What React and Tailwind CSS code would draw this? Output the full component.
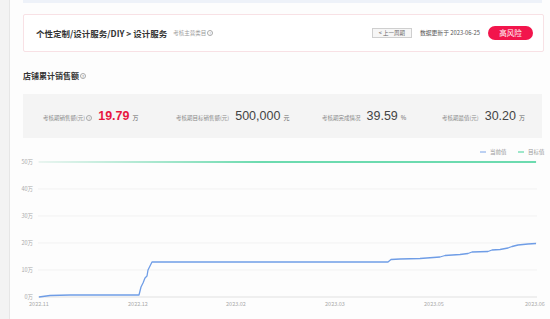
import React from "react";

const font = { fontFamily: '"Noto Sans CJK SC", "Noto Sans", sans-serif' };

const blue = [
  [39, 297], [50, 295.5], [70, 295], [139, 295], [141, 287], [143, 283], [145, 278],
  [147, 276], [148, 270], [152, 262], [388, 262], [391, 259.5], [400, 259], [420, 258.5],
  [440, 257], [445, 255.5], [460, 254.5], [468, 253.5], [472, 252], [488, 251.5],
  [492, 250], [500, 249.5], [508, 248], [512, 246.5], [518, 245], [528, 244], [536, 243.5],
];

function Info() {
  return (
    <span className="inline-grid place-items-center w-[6px] h-[6px] rounded-full border-[0.5px] border-[#aaa] text-[4px] leading-none text-[#aaa] ml-[1px]">
      ?
    </span>
  );
}

function Stat({ label, value, unit, red, info, w }) {
  return (
    <div className={`flex items-baseline ${w}`}>
      <span className="text-[5.5px] text-[#888] mr-[6px] flex items-center">
        {label}
        {info && <Info />}
      </span>
      <span
        className={`text-[12.5px] leading-none ${red ? "text-[#e8173f] font-bold" : "text-[#444]"}`}
        style={{ fontFamily: '"Liberation Sans", sans-serif' }}
      >
        {value}
      </span>
      <span className="text-[6px] text-[#666] ml-[3px]">{unit}</span>
    </div>
  );
}

function Chart() {
  const ys = [
    ["50万", 162], ["40万", 189], ["30万", 216], ["20万", 243], ["10万", 270], ["0万", 297],
  ];
  const xs = [
    ["2022.11", 39], ["2022.12", 138], ["2023.02", 236], ["2023.03", 335], ["2023.05", 434], ["2023.06", 535],
  ];
  return (
    <svg width="520" height="181" viewBox="23 138 520 181" className="block overflow-visible">
      <defs>
        <linearGradient id="g" x1="39" x2="260" y1="0" y2="0" gradientUnits="userSpaceOnUse">
          <stop offset="0" stopColor="#3ed197" stopOpacity="0.1" />
          <stop offset="1" stopColor="#3ed197" stopOpacity="1" />
        </linearGradient>
      </defs>
      <line x1="480" x2="486" y1="152" y2="152" stroke="#7aa3e8" strokeWidth="1" />
      <text x="490" y="154" fontSize="5.5" fill="#999">当前值</text>
      <line x1="518" x2="524" y1="152" y2="152" stroke="#3ed197" strokeWidth="1" />
      <text x="528" y="154" fontSize="5.5" fill="#999">目标值</text>
      {ys.map(([t, y]) => (
        <g key={t}>
          <line x1="38" x2="537" y1={y} y2={y} stroke={y === 297 ? "#d4d4d4" : "#ececec"} strokeWidth="0.7" />
          <text x="33" y={y + 2} fontSize="5.5" fill="#aaa" textAnchor="end">{t}</text>
        </g>
      ))}
      {xs.map(([t, x]) => (
        <text key={t} x={x} y={305.5} fontSize="5.5" fill="#aaa" textAnchor="middle">{t}</text>
      ))}
      <line x1="39" x2="536" y1="162" y2="162" stroke="url(#g)" strokeWidth="1.4" />
      <polyline
        points={blue.map((p) => p.join(",")).join(" ")}
        fill="none"
        stroke="#6f9de6"
        strokeWidth="1.3"
        strokeLinejoin="round"
      />
    </svg>
  );
}

export default function App() {
  return (
    <div className="w-[550px] h-[319px] flex bg-[#fdfdfd] overflow-hidden" style={font}>
      <div className="w-[10px] h-full bg-[#f3f3f3] border-r border-[#e6e6e6]" />
      <div className="flex-1 pl-[13px] pr-[6px]">
        <div className="h-[3px] mr-[2px] bg-[#eef2f9]" />

        <div className="mt-[11px] h-[38px] border border-[#f8e1e5] rounded-[2px] bg-white flex items-center pl-[12px] pr-[10px]">
          <span className="text-[8.5px] font-bold text-[#333]">个性定制/设计服务/DIY &gt; 设计服务</span>
          <span className="text-[5.5px] text-[#999] ml-[6px] flex items-center">
            考核主营类目
            <Info />
          </span>
          <div className="ml-auto flex items-center">
            <span className="h-[10px] px-[6px] border border-[#cfcfcf] bg-[#f6f6f6] text-[5.5px] text-[#666] flex items-center">
              &lt; 上一周期
            </span>
            <span className="ml-[8px] text-[5.8px] text-[#555]">数据更新于 2023-06-25</span>
            <span className="ml-[8px] w-[45px] h-[14px] rounded-full bg-[#f2154c] text-white text-[7.5px] flex items-center justify-center">
              高风险
            </span>
          </div>
        </div>

        <div className="mt-[18px] h-[12px] flex items-center text-[8px] font-bold text-[#333]">
          店铺累计销售额
          <Info />
        </div>

        <div className="mt-[12px] h-[44px] mr-[2px] bg-[#f4f4f4] flex items-center pl-[20px]">
          <Stat w="w-[133px]" label="考核期销售额(元)" info value="19.79" unit="万" red />
          <Stat w="w-[146px]" label="考核期目标销售额(元)" value="500,000" unit="元" />
          <Stat w="w-[120px]" label="考核期完成情况" value="39.59" unit="%" />
          <Stat label="考核期最值(元)" value="30.20" unit="万" />
        </div>

        <Chart />
      </div>
    </div>
  );
}
